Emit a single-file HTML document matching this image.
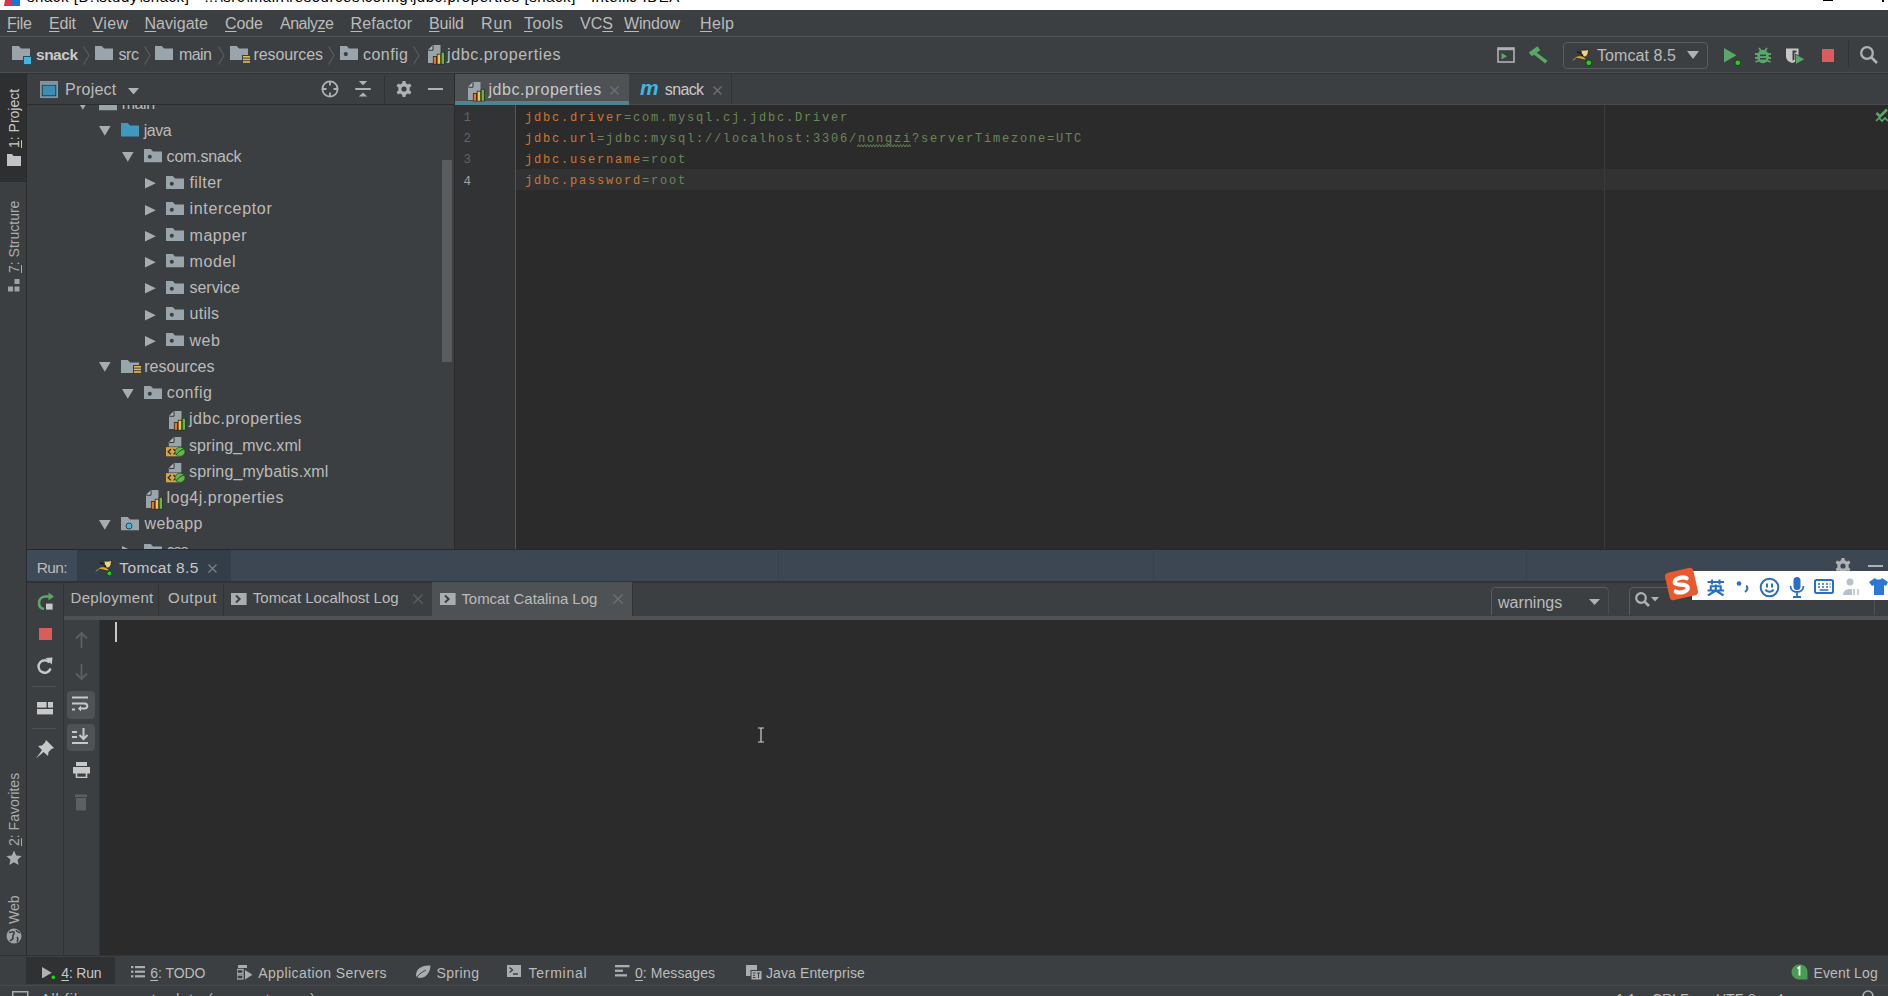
<!DOCTYPE html>
<html><head><meta charset="utf-8">
<style>
*{margin:0;padding:0;box-sizing:border-box}
html,body{width:1888px;height:996px;overflow:hidden;background:#3c3f41;font-family:"Liberation Sans",sans-serif;color:#bbbbbb;position:relative}
.a{position:absolute;display:block}
.t{position:absolute;white-space:pre}
u{text-decoration:underline;text-underline-offset:2px;text-decoration-thickness:1px}
</style></head><body>
<div class="a" style="left:0px;top:0px;width:1888px;height:10px;background:#ffffff;"></div>
<div class="a" style="left:0;top:0;width:1888px;height:10px;overflow:hidden"><div style="position:absolute;left:5px;top:-6px;width:8px;height:12px;background:#e0304a;transform:skewX(-10deg)"></div><div style="position:absolute;left:11px;top:-6px;width:9px;height:12px;background:#1a73d8"></div><div style="position:absolute;left:27px;top:-13.5px;font-size:15px;line-height:20px;color:#000;white-space:pre;letter-spacing:0.56px">snack [D:\study\snack] - ...\src\main\resources\config\jdbc.properties [snack] - IntelliJ IDEA</div><div style="position:absolute;left:1823px;top:0px;width:10px;height:1.2px;background:#000"></div><div style="position:absolute;left:1882px;top:0px;width:1.5px;height:1.5px;background:#000"></div></div>
<div class="a" style="left:0px;top:10px;width:1888px;height:26px;background:#3c3f41;"></div>
<div class="a" style="left:0px;top:36px;width:1888px;height:1px;background:#515658;"></div>
<div class="t" style="left:7.00px;top:14.52px;font-size:16px;line-height:17.875px;color:#bbbbbb;letter-spacing:-0.260px;"><u>F</u>ile</div>
<div class="t" style="left:49.00px;top:14.52px;font-size:16px;line-height:17.875px;color:#bbbbbb;letter-spacing:-0.193px;"><u>E</u>dit</div>
<div class="t" style="left:92.50px;top:14.52px;font-size:16px;line-height:17.875px;color:#bbbbbb;letter-spacing:0.370px;"><u>V</u>iew</div>
<div class="t" style="left:144.50px;top:14.52px;font-size:16px;line-height:17.875px;color:#bbbbbb;letter-spacing:0.049px;"><u>N</u>avigate</div>
<div class="t" style="left:225.00px;top:14.52px;font-size:16px;line-height:17.875px;color:#bbbbbb;letter-spacing:-0.083px;"><u>C</u>ode</div>
<div class="t" style="left:280.00px;top:14.52px;font-size:16px;line-height:17.875px;color:#bbbbbb;letter-spacing:-0.487px;">Analy<u>z</u>e</div>
<div class="t" style="left:350.60px;top:14.52px;font-size:16px;line-height:17.875px;color:#bbbbbb;letter-spacing:0.147px;"><u>R</u>efactor</div>
<div class="t" style="left:429.00px;top:14.52px;font-size:16px;line-height:17.875px;color:#bbbbbb;letter-spacing:-0.145px;"><u>B</u>uild</div>
<div class="t" style="left:481.00px;top:14.52px;font-size:16px;line-height:17.875px;color:#bbbbbb;letter-spacing:0.820px;">R<u>u</u>n</div>
<div class="t" style="left:524.00px;top:14.52px;font-size:16px;line-height:17.875px;color:#bbbbbb;letter-spacing:0.410px;"><u>T</u>ools</div>
<div class="t" style="left:580.00px;top:14.52px;font-size:16px;line-height:17.875px;color:#bbbbbb;letter-spacing:0.047px;">VC<u>S</u></div>
<div class="t" style="left:624.00px;top:14.52px;font-size:16px;line-height:17.875px;color:#bbbbbb;letter-spacing:-0.181px;"><u>W</u>indow</div>
<div class="t" style="left:700.00px;top:14.52px;font-size:16px;line-height:17.875px;color:#bbbbbb;letter-spacing:0.365px;"><u>H</u>elp</div>
<div class="a" style="left:0px;top:37px;width:1888px;height:35px;background:#3c3f41;"></div>
<div class="a" style="left:0px;top:72px;width:1888px;height:1px;background:#4b4d4f;"></div>
<svg class="a" style="left:12px;top:46px;" width="18" height="14" viewBox="0 0 18 14"><path d="M0 0H6.8L9.0 2.5H18V14H0Z" fill="#9aa4ab"/></svg>
<svg class="a" style="left:23px;top:55.5px;" width="9" height="9" viewBox="0 0 9 9"><rect x="0.5" y="0.5" width="8" height="8" fill="#40b6e0" stroke="#1d4f62" stroke-width="1"/></svg>
<div class="t" style="left:36.00px;top:45.97px;font-size:15.5px;line-height:17.317px;color:#c8c8c8;font-weight:bold;letter-spacing:-0.488px;">snack</div>
<svg class="a" style="left:83px;top:45.5px;" width="7" height="19" viewBox="0 0 7 19"><path d="M0.5 0.5L6 9.5L0.5 18.5" stroke="#5a5e60" stroke-width="1.1" fill="none"/></svg>
<svg class="a" style="left:95px;top:46px;" width="18" height="14" viewBox="0 0 18 14"><path d="M0 0H6.8L9.0 2.5H18V14H0Z" fill="#9aa4ab"/></svg>
<div class="t" style="left:118.50px;top:45.52px;font-size:16px;line-height:17.875px;color:#bbbbbb;letter-spacing:-0.414px;">src</div>
<svg class="a" style="left:144px;top:45.5px;" width="7" height="19" viewBox="0 0 7 19"><path d="M0.5 0.5L6 9.5L0.5 18.5" stroke="#5a5e60" stroke-width="1.1" fill="none"/></svg>
<svg class="a" style="left:155px;top:46px;" width="18" height="14" viewBox="0 0 18 14"><path d="M0 0H6.8L9.0 2.5H18V14H0Z" fill="#9aa4ab"/></svg>
<div class="t" style="left:179.00px;top:45.52px;font-size:16px;line-height:17.875px;color:#bbbbbb;letter-spacing:-0.562px;">main</div>
<svg class="a" style="left:218px;top:45.5px;" width="7" height="19" viewBox="0 0 7 19"><path d="M0.5 0.5L6 9.5L0.5 18.5" stroke="#5a5e60" stroke-width="1.1" fill="none"/></svg>
<svg class="a" style="left:230px;top:46px;" width="18" height="14" viewBox="0 0 18 14"><path d="M0 0H6.8L9.0 2.5H18V14H0Z" fill="#9aa4ab"/></svg>
<svg class="a" style="left:242px;top:54.5px;" width="8" height="9" viewBox="0 0 8 9"><rect x="0" y="0" width="8" height="9" fill="#3c3f41"/><rect x="1" y="1" width="7" height="1.6" fill="#e8b94a"/><rect x="1" y="3.6" width="7" height="1.6" fill="#e8b94a"/><rect x="1" y="6.2" width="7" height="1.6" fill="#e8b94a"/></svg>
<div class="t" style="left:253.50px;top:45.52px;font-size:16px;line-height:17.875px;color:#bbbbbb;letter-spacing:-0.094px;">resources</div>
<svg class="a" style="left:328px;top:45.5px;" width="7" height="19" viewBox="0 0 7 19"><path d="M0.5 0.5L6 9.5L0.5 18.5" stroke="#5a5e60" stroke-width="1.1" fill="none"/></svg>
<svg class="a" style="left:340px;top:46px;" width="18" height="14" viewBox="0 0 18 14"><path d="M0 0H6.8L9.0 2.5H18V14H0Z" fill="#9aa4ab"/><circle cx="5.8" cy="8.1" r="2.1" fill="#3c3f41"/></svg>
<div class="t" style="left:363.00px;top:45.52px;font-size:16px;line-height:17.875px;color:#bbbbbb;letter-spacing:0.459px;">config</div>
<svg class="a" style="left:413px;top:45.5px;" width="7" height="19" viewBox="0 0 7 19"><path d="M0.5 0.5L6 9.5L0.5 18.5" stroke="#5a5e60" stroke-width="1.1" fill="none"/></svg>
<svg class="a" style="left:428px;top:45px;" width="17" height="20" viewBox="0 0 17 20"><path d="M5 0H12.5V18H0V5Z" fill="#9aa4ab"/><path d="M0.3 5L5 0.3V5Z" fill="#b4bbc0"/><path d="M5 0.3V5.2H0.3" stroke="#2f3234" stroke-width="1" fill="none"/><rect x="4.9" y="11" width="4.1" height="8.4" fill="#2f2a26"/><rect x="5.7" y="11.8" width="2.5" height="7" fill="#e8722a"/><rect x="8.8" y="8.8" width="4.3" height="10.6" fill="#2f2a26"/><rect x="9.6" y="9.6" width="2.7" height="9.2" fill="#f2c14a"/><rect x="12.8" y="6.9" width="4.1" height="12.5" fill="#24301f"/><rect x="13.6" y="7.7" width="2.5" height="11.1" fill="#5fb84a"/></svg>
<div class="t" style="left:447.00px;top:45.52px;font-size:16px;line-height:17.875px;color:#bbbbbb;letter-spacing:0.610px;">jdbc.properties</div>
<svg class="a" style="left:1497px;top:47px;" width="18" height="16" viewBox="0 0 18 16"><rect x="1" y="1" width="16" height="14" fill="none" stroke="#aeb2b5" stroke-width="1.6"/><rect x="1" y="1" width="16" height="2.2" fill="#aeb2b5"/><path d="M4.5 6V12.5L10 9.25Z" fill="#59a869"/></svg>
<svg class="a" style="left:1528px;top:45px;" width="21" height="19" viewBox="0 0 21 19"><path d="M0.8 7.5L9.5 1.2L12.3 5.2L3.8 11.3Z" fill="#59a869"/><path d="M6.5 6L19.5 15.8L17.3 18.5L4.5 8.5Z" fill="#59a869"/></svg>
<div class="a" style="left:1563px;top:41.5px;width:145px;height:27px;border:1.5px solid #5b5e60;border-radius:4px"></div>
<svg class="a" style="left:1572px;top:47px;" width="18" height="15" viewBox="0 0 18 15"><path d="M9 2.5L10.5 3.2L14.5 3L16.5 2L16 7L14 9.8L11.5 10L9.5 7Z" fill="#ecd48a" stroke="#2a2410" stroke-width="0.8"/><path d="M3.5 10C6 8.5 9 8.5 11 9.5L15 12.5L12 12.8L7 11.5L4 11Z" fill="#d4ad3c" stroke="#2a2410" stroke-width="0.6"/><path d="M1 13.5L4 10.5" stroke="#c9b56a" stroke-width="0.9"/><path d="M5 4.5L9 6.5" stroke="#1e1e1e" stroke-width="1.6"/><circle cx="10.3" cy="8.2" r="1" fill="#111"/></svg>
<svg class="a" style="left:1584.7px;top:58.5px;" width="7.6" height="7.6" viewBox="0 0 7.6 7.6"><circle cx="3.8" cy="3.8" r="2.8" fill="#1fd31f" stroke="#123512" stroke-width="0.8"/></svg>
<div class="t" style="left:1597.00px;top:47.02px;font-size:16px;line-height:17.875px;color:#bbbbbb;letter-spacing:0.082px;">Tomcat 8.5</div>
<svg class="a" style="left:1687px;top:51px;" width="12" height="8" viewBox="0 0 12 8"><path d="M0 0H12L6 8Z" fill="#aeb2b5"/></svg>
<svg class="a" style="left:1724px;top:48px;" width="13" height="15" viewBox="0 0 13 15"><path d="M0 0V14.5L12.5 7.25Z" fill="#59a869"/></svg>
<svg class="a" style="left:1734.0px;top:58.6px;" width="7.6" height="7.6" viewBox="0 0 7.6 7.6"><circle cx="3.8" cy="3.8" r="2.8" fill="#1fd31f" stroke="#123512" stroke-width="0.8"/></svg>
<svg class="a" style="left:1754px;top:46px;" width="18" height="18" viewBox="0 0 18 18"><ellipse cx="9" cy="10.5" rx="5.8" ry="6.8" fill="#59a869"/><path d="M5 2L7 5M13 2L11 5M1 8H17M1 12H17M1.5 16L5 14.5M16.5 16L13 14.5" stroke="#59a869" stroke-width="1.8"/><rect x="6" y="8.6" width="6" height="1.5" fill="#3c3f41"/><rect x="6" y="12" width="6" height="1.5" fill="#3c3f41"/></svg>
<svg class="a" style="left:1785px;top:48px;" width="21" height="17" viewBox="0 0 21 17"><path d="M1 0.5H13.5V8C13.5 12 10.5 14 7.2 15C4 14 1 12 1 8Z" fill="#c8c8c8"/><path d="M7.5 2.5H11.5V4.5H9.5V11.5C9 12 8 12.5 7.5 12.5Z" fill="#3c3f41"/><path d="M10.5 6V16.5L20 11.25Z" fill="#59a869" stroke="#3c3f41" stroke-width="0.8"/></svg>
<div class="a" style="left:1822px;top:48.5px;width:12px;height:13.5px;background:#db5c5c;"></div>
<div class="a" style="left:1848px;top:41px;width:1px;height:26px;background:#323232;"></div>
<svg class="a" style="left:1858px;top:45px;" width="21" height="20" viewBox="0 0 21 20"><circle cx="9" cy="8" r="5.8" fill="none" stroke="#afb1b3" stroke-width="2.3"/><path d="M13 12L19 18" stroke="#afb1b3" stroke-width="2.6"/></svg>
<div class="a" style="left:0px;top:73px;width:26px;height:882px;background:#3c3f41;"></div>
<div class="a" style="left:0px;top:73px;width:26px;height:109px;background:#2d2f30;"></div>
<div class="a" style="left:26px;top:73px;width:1px;height:882px;background:#2b2b2b;"></div>
<div class="t" style="left:7.33px;top:148.00px;font-size:14px;line-height:15.641px;color:#c8c8c8;transform-origin:0 0;transform:rotate(-90deg)"><u>1</u>: Project</div>
<svg class="a" style="left:7px;top:154px;" width="14" height="12" viewBox="0 0 14 12"><path d="M0 0H5L6.5 2H14V12H0Z" fill="#c0c4c6"/></svg>
<div class="t" style="left:7.33px;top:272.50px;font-size:14px;line-height:15.641px;color:#a9adb0;transform-origin:0 0;transform:rotate(-90deg)"><u>7</u>: Structure</div>
<svg class="a" style="left:7px;top:279px;" width="14" height="13" viewBox="0 0 14 13"><rect x="7.5" y="0" width="5" height="5" fill="#9ea2a4"/><rect x="1" y="7.5" width="5" height="5" fill="#9ea2a4"/><rect x="7.5" y="7.5" width="5" height="5" fill="#9ea2a4"/></svg>
<div class="t" style="left:7.33px;top:846.00px;font-size:14px;line-height:15.641px;color:#a9adb0;transform-origin:0 0;transform:rotate(-90deg)"><u>2</u>: Favorites</div>
<svg class="a" style="left:6px;top:850px;" width="16" height="16" viewBox="0 0 16 16"><path d="M8 0.5L10.2 5.6L15.6 6.1L11.5 9.7L12.7 15L8 12.2L3.3 15L4.5 9.7L0.4 6.1L5.8 5.6Z" fill="#a9adb0"/></svg>
<div class="t" style="left:7.33px;top:924.00px;font-size:14px;line-height:15.641px;color:#a9adb0;transform-origin:0 0;transform:rotate(-90deg)">Web</div>
<svg class="a" style="left:6px;top:928px;" width="16" height="16" viewBox="0 0 16 16"><circle cx="8" cy="8" r="7.5" fill="#9ea2a4"/><path d="M3 4C5 5 6 3 8 4C9 6 6 7 7 9C8 11 5 12 4 13M10 2C11 4 13 4 14 5M11 9C12 10 12 12 11 14" stroke="#3c3f41" stroke-width="1.6" fill="none"/></svg>
<div class="a" style="left:27px;top:73px;width:428px;height:476px;background:#3c3f41;"></div>
<div class="a" style="left:27px;top:73px;width:428px;height:1px;background:#323232;"></div>
<div class="a" style="left:27px;top:104px;width:428px;height:1px;background:#2b2b2b;"></div>
<svg class="a" style="left:40px;top:81px;" width="18" height="17" viewBox="0 0 18 17"><rect x="0.75" y="0.75" width="16.5" height="15.5" fill="#3b8db5" stroke="#8a9499" stroke-width="1.5"/><rect x="1.5" y="1.5" width="15" height="2.8" fill="#8a9499"/><rect x="2.3" y="4.3" width="13.4" height="10.4" fill="none" stroke="#253a46" stroke-width="0.8"/></svg>
<div class="t" style="left:65.00px;top:80.52px;font-size:16px;line-height:17.875px;color:#bbbbbb;letter-spacing:0.251px;">Project</div>
<svg class="a" style="left:128px;top:87.5px;" width="11" height="6.5" viewBox="0 0 11 6.5"><path d="M0 0H11L5.5 6.5Z" fill="#aeb2b5"/></svg>
<svg class="a" style="left:320px;top:80px;" width="20" height="18" viewBox="0 0 20 18"><circle cx="10" cy="9" r="7.6" fill="none" stroke="#afb1b3" stroke-width="1.8"/><path d="M10 1V5.5M10 12.5V17M2 9H6.5M13.5 9H18" stroke="#afb1b3" stroke-width="1.8"/></svg>
<svg class="a" style="left:355px;top:80px;" width="16" height="18" viewBox="0 0 16 18"><path d="M3.8 1H12.2L8 5.2Z" fill="#afb1b3"/><rect x="0.3" y="8" width="15.5" height="2" fill="#afb1b3"/><path d="M3.8 16.6H12.2L8 12.4Z" fill="#afb1b3"/></svg>
<div class="a" style="left:383.5px;top:75px;width:1px;height:28px;background:#323232;"></div>
<svg class="a" style="left:396px;top:81px;" width="16" height="16" viewBox="0 0 16 16"><path d="M6.6 0H9.4L9.9 2.3L11.8 3.4L14 2.6L15.4 5L13.6 6.6V9.4L15.4 11L14 13.4L11.8 12.6L9.9 13.7L9.4 16H6.6L6.1 13.7L4.2 12.6L2 13.4L0.6 11L2.4 9.4V6.6L0.6 5L2 2.6L4.2 3.4L6.1 2.3Z" fill="#afb1b3"/><circle cx="8" cy="8" r="2.6" fill="#3c3f41"/></svg>
<div class="a" style="left:428.3px;top:88px;width:15px;height:2.2px;background:#afb1b3;"></div>
<div class="a" style="left:0;top:0;width:1888px;height:996px;clip-path:inset(105px 1433px 447px 27px)">
<svg class="a" style="left:76.5px;top:99.95px;" width="12" height="10" viewBox="0 0 12 10"><path d="M0 0H11.6L5.8 9.7Z" fill="#a9acae"/></svg>
<svg class="a" style="left:99px;top:97.25px;" width="18" height="13.3" viewBox="0 0 18 13.3"><path d="M0 0H6.8L9.0 2.4H18V13.3H0Z" fill="#9aa4ab"/></svg>
<div class="t" style="left:121.70px;top:95.27px;font-size:16px;line-height:17.875px;color:#bbbbbb;letter-spacing:-0.396px;">main</div>
<svg class="a" style="left:99.2px;top:126.2px;" width="12" height="10" viewBox="0 0 12 10"><path d="M0 0H11.6L5.8 9.7Z" fill="#a9acae"/></svg>
<svg class="a" style="left:120.6px;top:123.2px;" width="18" height="13.5" viewBox="0 0 18 13.5"><path d="M0 0H6.8L9.0 2.4H18V13.5H0Z" fill="#3f98be"/></svg>
<div class="t" style="left:143.70px;top:121.52px;font-size:16px;line-height:17.875px;color:#bbbbbb;letter-spacing:-0.453px;">java</div>
<svg class="a" style="left:122px;top:152.45px;" width="12" height="10" viewBox="0 0 12 10"><path d="M0 0H11.6L5.8 9.7Z" fill="#a9acae"/></svg>
<svg class="a" style="left:143.8px;top:149.45px;" width="18" height="13.3" viewBox="0 0 18 13.3"><path d="M0 0H6.8L9.0 2.4H18V13.3H0Z" fill="#9aa4ab"/><circle cx="5.8" cy="7.7" r="2.0" fill="#3c3f41"/></svg>
<div class="t" style="left:166.60px;top:147.77px;font-size:16px;line-height:17.875px;color:#bbbbbb;letter-spacing:-0.184px;">com.snack</div>
<svg class="a" style="left:145.1px;top:178.3px;" width="11" height="11" viewBox="0 0 11 11"><path d="M0 0V10.5L10.8 5.25Z" fill="#a9acae"/></svg>
<svg class="a" style="left:166px;top:175.7px;" width="18" height="13.3" viewBox="0 0 18 13.3"><path d="M0 0H6.8L9.0 2.4H18V13.3H0Z" fill="#9aa4ab"/><circle cx="5.8" cy="7.7" r="2.0" fill="#3c3f41"/></svg>
<div class="t" style="left:189.50px;top:174.02px;font-size:16px;line-height:17.875px;color:#bbbbbb;letter-spacing:0.413px;">filter</div>
<svg class="a" style="left:145.1px;top:204.55px;" width="11" height="11" viewBox="0 0 11 11"><path d="M0 0V10.5L10.8 5.25Z" fill="#a9acae"/></svg>
<svg class="a" style="left:166px;top:201.95px;" width="18" height="13.3" viewBox="0 0 18 13.3"><path d="M0 0H6.8L9.0 2.4H18V13.3H0Z" fill="#9aa4ab"/><circle cx="5.8" cy="7.7" r="2.0" fill="#3c3f41"/></svg>
<div class="t" style="left:189.50px;top:200.27px;font-size:16px;line-height:17.875px;color:#bbbbbb;letter-spacing:0.661px;">interceptor</div>
<svg class="a" style="left:145.1px;top:230.8px;" width="11" height="11" viewBox="0 0 11 11"><path d="M0 0V10.5L10.8 5.25Z" fill="#a9acae"/></svg>
<svg class="a" style="left:166px;top:228.2px;" width="18" height="13.3" viewBox="0 0 18 13.3"><path d="M0 0H6.8L9.0 2.4H18V13.3H0Z" fill="#9aa4ab"/><circle cx="5.8" cy="7.7" r="2.0" fill="#3c3f41"/></svg>
<div class="t" style="left:189.50px;top:226.52px;font-size:16px;line-height:17.875px;color:#bbbbbb;letter-spacing:0.550px;">mapper</div>
<svg class="a" style="left:145.1px;top:257.05px;" width="11" height="11" viewBox="0 0 11 11"><path d="M0 0V10.5L10.8 5.25Z" fill="#a9acae"/></svg>
<svg class="a" style="left:166px;top:254.45px;" width="18" height="13.3" viewBox="0 0 18 13.3"><path d="M0 0H6.8L9.0 2.4H18V13.3H0Z" fill="#9aa4ab"/><circle cx="5.8" cy="7.7" r="2.0" fill="#3c3f41"/></svg>
<div class="t" style="left:189.50px;top:252.77px;font-size:16px;line-height:17.875px;color:#bbbbbb;letter-spacing:0.605px;">model</div>
<svg class="a" style="left:145.1px;top:283.3px;" width="11" height="11" viewBox="0 0 11 11"><path d="M0 0V10.5L10.8 5.25Z" fill="#a9acae"/></svg>
<svg class="a" style="left:166px;top:280.7px;" width="18" height="13.3" viewBox="0 0 18 13.3"><path d="M0 0H6.8L9.0 2.4H18V13.3H0Z" fill="#9aa4ab"/><circle cx="5.8" cy="7.7" r="2.0" fill="#3c3f41"/></svg>
<div class="t" style="left:189.50px;top:279.02px;font-size:16px;line-height:17.875px;color:#bbbbbb;letter-spacing:-0.031px;">service</div>
<svg class="a" style="left:145.1px;top:309.55px;" width="11" height="11" viewBox="0 0 11 11"><path d="M0 0V10.5L10.8 5.25Z" fill="#a9acae"/></svg>
<svg class="a" style="left:166px;top:306.95px;" width="18" height="13.3" viewBox="0 0 18 13.3"><path d="M0 0H6.8L9.0 2.4H18V13.3H0Z" fill="#9aa4ab"/><circle cx="5.8" cy="7.7" r="2.0" fill="#3c3f41"/></svg>
<div class="t" style="left:189.50px;top:305.27px;font-size:16px;line-height:17.875px;color:#bbbbbb;letter-spacing:0.287px;">utils</div>
<svg class="a" style="left:145.1px;top:335.8px;" width="11" height="11" viewBox="0 0 11 11"><path d="M0 0V10.5L10.8 5.25Z" fill="#a9acae"/></svg>
<svg class="a" style="left:166px;top:333.2px;" width="18" height="13.3" viewBox="0 0 18 13.3"><path d="M0 0H6.8L9.0 2.4H18V13.3H0Z" fill="#9aa4ab"/><circle cx="5.8" cy="7.7" r="2.0" fill="#3c3f41"/></svg>
<div class="t" style="left:189.50px;top:331.52px;font-size:16px;line-height:17.875px;color:#bbbbbb;letter-spacing:0.470px;">web</div>
<svg class="a" style="left:99.4px;top:362.45px;" width="12" height="10" viewBox="0 0 12 10"><path d="M0 0H11.6L5.8 9.7Z" fill="#a9acae"/></svg>
<svg class="a" style="left:121px;top:359.75px;" width="18" height="13.3" viewBox="0 0 18 13.3"><path d="M0 0H6.8L9.0 2.4H18V13.3H0Z" fill="#9aa4ab"/></svg>
<svg class="a" style="left:132.5px;top:365.05px;" width="8" height="9" viewBox="0 0 8 9"><rect x="0" y="0" width="8" height="9" fill="#3c3f41"/><rect x="1" y="1" width="7" height="1.6" fill="#e8b94a"/><rect x="1" y="3.6" width="7" height="1.6" fill="#e8b94a"/><rect x="1" y="6.2" width="7" height="1.6" fill="#e8b94a"/></svg>
<div class="t" style="left:144.30px;top:357.77px;font-size:16px;line-height:17.875px;color:#bbbbbb;letter-spacing:-0.006px;">resources</div>
<svg class="a" style="left:121.8px;top:388.7px;" width="12" height="10" viewBox="0 0 12 10"><path d="M0 0H11.6L5.8 9.7Z" fill="#a9acae"/></svg>
<svg class="a" style="left:143.9px;top:385.7px;" width="18" height="13.3" viewBox="0 0 18 13.3"><path d="M0 0H6.8L9.0 2.4H18V13.3H0Z" fill="#9aa4ab"/><circle cx="5.8" cy="7.7" r="2.0" fill="#3c3f41"/></svg>
<div class="t" style="left:166.80px;top:384.02px;font-size:16px;line-height:17.875px;color:#bbbbbb;letter-spacing:0.459px;">config</div>
<svg class="a" style="left:168.8px;top:410.75px;" width="17" height="20" viewBox="0 0 17 20"><path d="M5 0H12.5V18H0V5Z" fill="#9aa4ab"/><path d="M0.3 5L5 0.3V5Z" fill="#b4bbc0"/><path d="M5 0.3V5.2H0.3" stroke="#2f3234" stroke-width="1" fill="none"/><rect x="4.9" y="11" width="4.1" height="8.4" fill="#2f2a26"/><rect x="5.7" y="11.8" width="2.5" height="7" fill="#e8722a"/><rect x="8.8" y="8.8" width="4.3" height="10.6" fill="#2f2a26"/><rect x="9.6" y="9.6" width="2.7" height="9.2" fill="#f2c14a"/><rect x="12.8" y="6.9" width="4.1" height="12.5" fill="#24301f"/><rect x="13.6" y="7.7" width="2.5" height="11.1" fill="#5fb84a"/></svg>
<div class="t" style="left:189.00px;top:410.27px;font-size:16px;line-height:17.875px;color:#bbbbbb;letter-spacing:0.532px;">jdbc.properties</div>
<svg class="a" style="left:166px;top:436.5px;" width="20" height="20" viewBox="0 0 20 20"><path d="M8 0H15.3V9.6H2.8V5.2Z" fill="#9aa4ab"/><path d="M3 5.2L8 0.2V5.2Z" fill="#b4bbc0"/><path d="M8 0.2V5.4H3" stroke="#2f3234" stroke-width="1" fill="none"/><rect x="0" y="10.1" width="15" height="9.2" fill="#d6a444"/><path d="M5 12L2.2 14.7L5 17.4" stroke="#2b2b2b" stroke-width="1.3" fill="none"/><path d="M7.5 12L10.3 14.7L7.5 17.4" stroke="#2b2b2b" stroke-width="1.3" fill="none"/><ellipse cx="14" cy="14.8" rx="5" ry="4.6" fill="#5cb84a" stroke="#2b3a26" stroke-width="0.6"/><path d="M10 18C12 15 14 13.5 18 12" stroke="#244a1f" stroke-width="1" fill="none"/></svg>
<div class="t" style="left:189.00px;top:436.52px;font-size:16px;line-height:17.875px;color:#bbbbbb;letter-spacing:0.097px;">spring_mvc.xml</div>
<svg class="a" style="left:166px;top:462.75px;" width="20" height="20" viewBox="0 0 20 20"><path d="M8 0H15.3V9.6H2.8V5.2Z" fill="#9aa4ab"/><path d="M3 5.2L8 0.2V5.2Z" fill="#b4bbc0"/><path d="M8 0.2V5.4H3" stroke="#2f3234" stroke-width="1" fill="none"/><rect x="0" y="10.1" width="15" height="9.2" fill="#d6a444"/><path d="M5 12L2.2 14.7L5 17.4" stroke="#2b2b2b" stroke-width="1.3" fill="none"/><path d="M7.5 12L10.3 14.7L7.5 17.4" stroke="#2b2b2b" stroke-width="1.3" fill="none"/><ellipse cx="14" cy="14.8" rx="5" ry="4.6" fill="#5cb84a" stroke="#2b3a26" stroke-width="0.6"/><path d="M10 18C12 15 14 13.5 18 12" stroke="#244a1f" stroke-width="1" fill="none"/></svg>
<div class="t" style="left:189.00px;top:462.77px;font-size:16px;line-height:17.875px;color:#bbbbbb;letter-spacing:0.145px;">spring_mybatis.xml</div>
<svg class="a" style="left:146.3px;top:489.5px;" width="17" height="20" viewBox="0 0 17 20"><path d="M5 0H12.5V18H0V5Z" fill="#9aa4ab"/><path d="M0.3 5L5 0.3V5Z" fill="#b4bbc0"/><path d="M5 0.3V5.2H0.3" stroke="#2f3234" stroke-width="1" fill="none"/><rect x="4.9" y="11" width="4.1" height="8.4" fill="#2f2a26"/><rect x="5.7" y="11.8" width="2.5" height="7" fill="#e8722a"/><rect x="8.8" y="8.8" width="4.3" height="10.6" fill="#2f2a26"/><rect x="9.6" y="9.6" width="2.7" height="9.2" fill="#f2c14a"/><rect x="12.8" y="6.9" width="4.1" height="12.5" fill="#24301f"/><rect x="13.6" y="7.7" width="2.5" height="11.1" fill="#5fb84a"/></svg>
<div class="t" style="left:166.50px;top:489.02px;font-size:16px;line-height:17.875px;color:#bbbbbb;letter-spacing:0.500px;">log4j.properties</div>
<svg class="a" style="left:99.4px;top:519.95px;" width="12" height="10" viewBox="0 0 12 10"><path d="M0 0H11.6L5.8 9.7Z" fill="#a9acae"/></svg>
<svg class="a" style="left:121px;top:517.25px;" width="18" height="13.3" viewBox="0 0 18 13.3"><path d="M0 0H6.8L9.0 2.4H18V13.3H0Z" fill="#9aa4ab"/></svg>
<svg class="a" style="left:124.5px;top:522.25px;" width="8" height="8" viewBox="0 0 8 8"><circle cx="4" cy="4" r="3" fill="#40b6e0" stroke="#2b4652" stroke-width="1"/></svg>
<div class="t" style="left:144.60px;top:515.27px;font-size:16px;line-height:17.875px;color:#bbbbbb;letter-spacing:0.351px;">webapp</div>
<svg class="a" style="left:122px;top:545.8px;" width="11" height="11" viewBox="0 0 11 11"><path d="M0 0V10.5L10.8 5.25Z" fill="#a9acae"/></svg>
<svg class="a" style="left:144px;top:543.5px;" width="18" height="13.3" viewBox="0 0 18 13.3"><path d="M0 0H6.8L9.0 2.4H18V13.3H0Z" fill="#9aa4ab"/></svg>
<div class="t" style="left:166.50px;top:541.52px;font-size:16px;line-height:17.875px;color:#bbbbbb;letter-spacing:-1.000px;">css</div>
</div>
<div class="a" style="left:442px;top:160px;width:10px;height:202px;background:#5a5d5f;border-radius:1px"></div>
<div class="a" style="left:454px;top:73px;width:1px;height:476px;background:#2b2b2b;"></div>
<div class="a" style="left:455px;top:73px;width:1433px;height:32px;background:#3c3f41;"></div>
<div class="a" style="left:455px;top:73px;width:1433px;height:1px;background:#323232;"></div>
<div class="a" style="left:455px;top:104px;width:1433px;height:1px;background:#47494b;"></div>
<div class="a" style="left:455px;top:74px;width:174px;height:27px;background:#4e5254;"></div>
<div class="a" style="left:455px;top:101px;width:174px;height:3.8px;background:#508290;"></div>
<svg class="a" style="left:468px;top:81.5px;" width="17" height="20" viewBox="0 0 17 20"><path d="M5 0H12.5V18H0V5Z" fill="#9aa4ab"/><path d="M0.3 5L5 0.3V5Z" fill="#b4bbc0"/><path d="M5 0.3V5.2H0.3" stroke="#2f3234" stroke-width="1" fill="none"/><rect x="4.9" y="11" width="4.1" height="8.4" fill="#2f2a26"/><rect x="5.7" y="11.8" width="2.5" height="7" fill="#e8722a"/><rect x="8.8" y="8.8" width="4.3" height="10.6" fill="#2f2a26"/><rect x="9.6" y="9.6" width="2.7" height="9.2" fill="#f2c14a"/><rect x="12.8" y="6.9" width="4.1" height="12.5" fill="#24301f"/><rect x="13.6" y="7.7" width="2.5" height="11.1" fill="#5fb84a"/></svg>
<div class="t" style="left:488.50px;top:81.12px;font-size:16px;line-height:17.875px;color:#c8c8c8;letter-spacing:0.560px;">jdbc.properties</div>
<svg class="a" style="left:610.3px;top:85.5px;" width="9" height="9" viewBox="0 0 9 9"><path d="M0.5 0.5L8.5 8.5M8.5 0.5L0.5 8.5" stroke="#6f7274" stroke-width="1.3"/></svg>
<div class="a" style="left:730.5px;top:74px;width:1px;height:30px;background:#323232;"></div>
<div class="t" style="left:640px;top:76px;font-size:21px;line-height:23px;color:#40b6e0;font-style:italic;font-weight:bold;letter-spacing:-0.5px">m</div>
<div class="t" style="left:664.80px;top:81.12px;font-size:16px;line-height:17.875px;color:#c8c8c8;letter-spacing:-0.649px;">snack</div>
<svg class="a" style="left:713.4px;top:85.5px;" width="9" height="9" viewBox="0 0 9 9"><path d="M0.5 0.5L8.5 8.5M8.5 0.5L0.5 8.5" stroke="#6f7274" stroke-width="1.3"/></svg>
<div class="a" style="left:455px;top:105px;width:1433px;height:444px;background:#2b2b2b;"></div>
<div class="a" style="left:455px;top:105px;width:60px;height:444px;background:#313335;"></div>
<div class="a" style="left:515px;top:105px;width:1px;height:444px;background:#555555;"></div>
<div class="a" style="left:516px;top:168.8px;width:1372px;height:21.5px;background:#323232;"></div>
<div class="a" style="left:1604px;top:105px;width:1px;height:444px;background:#3b3b3b;"></div>
<div class="t" style="left:463.60px;top:111.09px;font-size:12.5px;line-height:14.160px;color:#606366;font-family:'Liberation Mono',monospace;">1</div>
<div class="t" style="left:524.90px;top:111.51px;font-size:12px;line-height:13.594px;color:#6a8759;font-family:'Liberation Mono',monospace;letter-spacing:1.8px;"><span style="color:#cc7832">jdbc.driver</span>=com.mysql.cj.jdbc.Driver</div>
<div class="t" style="left:463.60px;top:132.29px;font-size:12.5px;line-height:14.160px;color:#606366;font-family:'Liberation Mono',monospace;">2</div>
<div class="t" style="left:524.90px;top:132.71px;font-size:12px;line-height:13.594px;color:#6a8759;font-family:'Liberation Mono',monospace;letter-spacing:1.8px;"><span style="color:#cc7832">jdbc.url</span>=jdbc:mysql://localhost:3306/nongzi?serverTimezone=UTC</div>
<div class="t" style="left:463.60px;top:153.49px;font-size:12.5px;line-height:14.160px;color:#606366;font-family:'Liberation Mono',monospace;">3</div>
<div class="t" style="left:524.90px;top:153.91px;font-size:12px;line-height:13.594px;color:#6a8759;font-family:'Liberation Mono',monospace;letter-spacing:1.8px;"><span style="color:#cc7832">jdbc.username</span>=root</div>
<div class="t" style="left:463.60px;top:174.69px;font-size:12.5px;line-height:14.160px;color:#a4a3a3;font-family:'Liberation Mono',monospace;">4</div>
<div class="t" style="left:524.90px;top:175.11px;font-size:12px;line-height:13.594px;color:#6a8759;font-family:'Liberation Mono',monospace;letter-spacing:1.8px;"><span style="color:#cc7832">jdbc.password</span>=root</div>
<svg class="a" style="left:857.2px;top:143.5px;" width="54" height="4" viewBox="0 0 54 4"><path d="M0 3L1.5 0.5L3 3L4.5 0.5L6 3L7.5 0.5L9 3L10.5 0.5L12 3L13.5 0.5L15 3L16.5 0.5L18 3L19.5 0.5L21 3L22.5 0.5L24 3L25.5 0.5L27 3L28.5 0.5L30 3L31.5 0.5L33 3L34.5 0.5L36 3L37.5 0.5L39 3L40.5 0.5L42 3L43.5 0.5L45 3L46.5 0.5L48 3L49.5 0.5L51 3L52.5 0.5L54 3" stroke="#6a8759" stroke-width="0.9" fill="none"/></svg>
<svg class="a" style="left:1875px;top:107px;" width="13" height="16" viewBox="0 0 13 16"><path d="M1.5 6L5 9.5L12 2.5" stroke="#59a869" stroke-width="2.6" fill="none"/><path d="M1 14L4 11L7 14L10 11L13 14" stroke="#59a869" stroke-width="1.6" fill="none"/></svg>
<div class="a" style="left:27px;top:549px;width:1861px;height:1.3px;background:#26282a;"></div>
<div class="a" style="left:27px;top:550px;width:1861px;height:31px;background:#3c4753;"></div>
<div class="a" style="left:27px;top:550px;width:50px;height:31px;background:#3e4a58;"></div>
<div class="a" style="left:77px;top:550px;width:154px;height:31px;background:#343e48;"></div>
<div class="a" style="left:778px;top:551px;width:1px;height:29px;background:#37414c;"></div>
<div class="a" style="left:1153px;top:551px;width:1px;height:29px;background:#37414c;"></div>
<div class="a" style="left:1526px;top:551px;width:1px;height:29px;background:#37414c;"></div>
<div class="t" style="left:36.70px;top:558.97px;font-size:15.5px;line-height:17.317px;color:#bbbbbb;letter-spacing:-0.583px;">Run:</div>
<svg class="a" style="left:95px;top:558px;" width="18" height="15" viewBox="0 0 18 15"><path d="M9 2.5L10.5 3.2L14.5 3L16.5 2L16 7L14 9.8L11.5 10L9.5 7Z" fill="#ecd48a" stroke="#2a2410" stroke-width="0.8"/><path d="M3.5 10C6 8.5 9 8.5 11 9.5L15 12.5L12 12.8L7 11.5L4 11Z" fill="#d4ad3c" stroke="#2a2410" stroke-width="0.6"/><path d="M1 13.5L4 10.5" stroke="#c9b56a" stroke-width="0.9"/><path d="M5 4.5L9 6.5" stroke="#1e1e1e" stroke-width="1.6"/><circle cx="10.3" cy="8.2" r="1" fill="#111"/></svg>
<svg class="a" style="left:106.39999999999999px;top:570.3000000000001px;" width="6.8" height="6.8" viewBox="0 0 6.8 6.8"><circle cx="3.4" cy="3.4" r="2.4" fill="#1fd31f" stroke="#123512" stroke-width="0.8"/></svg>
<div class="t" style="left:119.30px;top:558.97px;font-size:15.5px;line-height:17.317px;color:#c8c8c8;letter-spacing:0.354px;">Tomcat 8.5</div>
<svg class="a" style="left:208.3px;top:563.8px;" width="9" height="9" viewBox="0 0 9 9"><path d="M0.5 0.5L8.5 8.5M8.5 0.5L0.5 8.5" stroke="#7d8084" stroke-width="1.3"/></svg>
<div class="a" style="left:27px;top:581px;width:1861px;height:2px;background:#323232;"></div>
<div class="a" style="left:27px;top:583px;width:36px;height:372px;background:#3c3f41;"></div>
<div class="a" style="left:63px;top:583px;width:1px;height:372px;background:#323232;"></div>
<div class="a" style="left:64px;top:583px;width:1824px;height:32px;background:#3c3f41;"></div>
<div class="a" style="left:64px;top:615.5px;width:1824px;height:4.8px;background:#4e5254;"></div>
<div class="a" style="left:64px;top:620.3px;width:35px;height:335px;background:#3c3f41;"></div>
<div class="a" style="left:99px;top:620.3px;width:1px;height:335px;background:#323232;"></div>
<div class="a" style="left:100px;top:620.3px;width:1788px;height:335px;background:#2b2b2b;"></div>
<div class="a" style="left:158.2px;top:584px;width:1px;height:31px;background:#323232;"></div>
<div class="a" style="left:223.4px;top:584px;width:1px;height:31px;background:#323232;"></div>
<div class="a" style="left:431.8px;top:584px;width:1px;height:31px;background:#323232;"></div>
<div class="a" style="left:432px;top:582px;width:200px;height:33.5px;background:#4e5254;"></div>
<div class="a" style="left:631.7px;top:584px;width:1px;height:31px;background:#323232;"></div>
<div class="t" style="left:70.50px;top:590.42px;font-size:15px;line-height:16.758px;color:#bbbbbb;letter-spacing:0.295px;">Deployment</div>
<div class="t" style="left:168.10px;top:590.42px;font-size:15px;line-height:16.758px;color:#bbbbbb;letter-spacing:0.634px;">Output</div>
<svg class="a" style="left:231.3px;top:592.9px;" width="16" height="13" viewBox="0 0 16 13"><rect x="0" y="0" width="15.6" height="12" fill="#a9adb0"/><path d="M5 2.6L8.6 6L5 9.4" stroke="#3c3f41" stroke-width="2" fill="none"/></svg>
<div class="t" style="left:252.80px;top:590.42px;font-size:15px;line-height:16.758px;color:#bbbbbb;letter-spacing:-0.006px;">Tomcat Localhost Log</div>
<svg class="a" style="left:412.7px;top:594px;" width="10" height="10" viewBox="0 0 10 10"><path d="M0.5 0.5L9.5 9.5M9.5 0.5L0.5 9.5" stroke="#5e6163" stroke-width="1.3"/></svg>
<svg class="a" style="left:440.3px;top:592.5px;" width="16" height="13" viewBox="0 0 16 13"><rect x="0" y="0" width="15.6" height="12" fill="#a9adb0"/><path d="M5 2.6L8.6 6L5 9.4" stroke="#3c3f41" stroke-width="2" fill="none"/></svg>
<div class="t" style="left:461.40px;top:590.62px;font-size:15px;line-height:16.758px;color:#bbbbbb;letter-spacing:-0.047px;">Tomcat Catalina Log</div>
<svg class="a" style="left:613px;top:594px;" width="10" height="10" viewBox="0 0 10 10"><path d="M0.5 0.5L9.5 9.5M9.5 0.5L0.5 9.5" stroke="#6f7274" stroke-width="1.3"/></svg>
<div class="a" style="left:1490.5px;top:586.5px;width:118px;height:32px;border:1.5px solid #5b5e60;border-radius:4px;clip-path:inset(0 0 3.5px 0)"></div>
<div class="t" style="left:1498.00px;top:594.02px;font-size:16px;line-height:17.875px;color:#bbbbbb;letter-spacing:0.038px;">warnings</div>
<svg class="a" style="left:1588.7px;top:599px;" width="11" height="6" viewBox="0 0 11 6"><path d="M0 0H11L5.5 6Z" fill="#aeb2b5"/></svg>
<div class="a" style="left:1628.7px;top:586.5px;width:246px;height:32px;border:1.5px solid #5b5e60;border-radius:4px;clip-path:inset(0 0 3.5px 0)"></div>
<svg class="a" style="left:1634px;top:591px;" width="26" height="18" viewBox="0 0 26 18"><circle cx="7" cy="7" r="4.8" fill="none" stroke="#afb1b3" stroke-width="2.2"/><path d="M10.3 10.3L15 15" stroke="#afb1b3" stroke-width="2.6"/><path d="M17 6H25L21 10.5Z" fill="#afb1b3"/></svg>
<svg class="a" style="left:37px;top:592px;" width="18" height="18" viewBox="0 0 18 18"><path d="M13 4.5H9C4.5 4.5 2 7.5 2 11C2 14 4 16.5 7 17" stroke="#59a869" stroke-width="2.6" fill="none"/><path d="M11.5 0.5L17 4.5L11.5 8.5Z" fill="#59a869"/><rect x="9" y="11.6" width="6.6" height="6" fill="#c8c8c8"/></svg>
<div class="a" style="left:38.5px;top:627.7px;width:13.1px;height:12.4px;background:#db5c5c;"></div>
<svg class="a" style="left:36px;top:656px;" width="18" height="19" viewBox="0 0 18 19"><path d="M13.5 6.5A6.2 6.2 0 1 0 14.6 12.5" stroke="#c8c8c8" stroke-width="2.4" fill="none"/><path d="M9.5 2L16.5 1.5L15.8 8.5Z" fill="#c8c8c8"/></svg>
<div class="a" style="left:32px;top:686px;width:24px;height:1px;background:#4e5254;"></div>
<svg class="a" style="left:36.8px;top:702px;" width="16" height="13" viewBox="0 0 16 13"><rect x="0" y="0" width="9.6" height="5.6" fill="#c8c8c8"/><rect x="11" y="0" width="5" height="5.6" fill="#c8c8c8"/><rect x="0" y="7" width="16" height="5.4" fill="#c8c8c8"/></svg>
<div class="a" style="left:32px;top:728px;width:24px;height:1px;background:#4e5254;"></div>
<svg class="a" style="left:35px;top:739px;" width="20" height="20" viewBox="0 0 20 20"><path d="M11 1L19 9L16.5 10L13.5 13L13 17L8.5 13L1 19.5L7 11L3 7L7 6.5L10 3.5Z" fill="#c8c8c8"/></svg>
<svg class="a" style="left:74.5px;top:632px;" width="13" height="17" viewBox="0 0 13 17"><path d="M6.5 1V16M1 6.5L6.5 1L12 6.5" stroke="#5d6062" stroke-width="1.8" fill="none"/></svg>
<svg class="a" style="left:74.5px;top:664px;" width="13" height="17" viewBox="0 0 13 17"><path d="M6.5 0V15M1 9.5L6.5 15L12 9.5" stroke="#5d6062" stroke-width="1.8" fill="none"/></svg>
<div class="a" style="left:67.4px;top:691px;width:27.5px;height:27.5px;background:#4e5254;border-radius:4px"></div>
<svg class="a" style="left:72px;top:696px;" width="18" height="17" viewBox="0 0 18 17"><rect x="0" y="0.5" width="16" height="2" fill="#c8c8c8"/><rect x="0" y="6.5" width="13" height="2" fill="#c8c8c8"/><path d="M12.5 7.5C16 7.5 16.5 12.5 12.5 12.5H7.5" stroke="#c8c8c8" stroke-width="2" fill="none"/><path d="M9 9.5L6 12.5L9 15.5Z" fill="#c8c8c8"/><rect x="0" y="12.5" width="3" height="2" fill="#c8c8c8"/></svg>
<div class="a" style="left:67.4px;top:723.6px;width:27.5px;height:27.8px;background:#4e5254;border-radius:4px"></div>
<svg class="a" style="left:72px;top:728px;" width="18" height="18" viewBox="0 0 18 18"><rect x="0" y="3" width="5" height="2" fill="#c8c8c8"/><rect x="0" y="8" width="5" height="2" fill="#c8c8c8"/><rect x="0" y="14" width="16" height="2" fill="#c8c8c8"/><path d="M11.5 0V11M7.5 7L11.5 11L15.5 7" stroke="#c8c8c8" stroke-width="2" fill="none"/></svg>
<svg class="a" style="left:72.8px;top:762px;" width="17" height="16" viewBox="0 0 17 16"><rect x="3" y="0" width="11" height="4" fill="#c8c8c8"/><rect x="0" y="5" width="17" height="6.5" fill="#c8c8c8"/><rect x="3.5" y="10" width="10" height="5.5" fill="none" stroke="#c8c8c8" stroke-width="1.6"/></svg>
<svg class="a" style="left:74px;top:794px;" width="14" height="17" viewBox="0 0 14 17"><rect x="1" y="0.5" width="12" height="2.5" fill="#5d6062"/><rect x="2" y="4" width="10" height="12.5" fill="#5d6062"/></svg>
<div class="a" style="left:115px;top:621.5px;width:2px;height:20px;background:#c8c8c8;"></div>
<svg class="a" style="left:756px;top:727px;" width="10" height="16" viewBox="0 0 10 16"><path d="M2 1H8M5 1V15M2 15H8" stroke="#d0d0d0" stroke-width="1.2" fill="none"/></svg>
<svg class="a" style="left:1835px;top:558px;" width="16" height="16" viewBox="0 0 16 16"><path d="M6.6 0H9.4L9.9 2.3L11.8 3.4L14 2.6L15.4 5L13.6 6.6V9.4L15.4 11L14 13.4L11.8 12.6L9.9 13.7L9.4 16H6.6L6.1 13.7L4.2 12.6L2 13.4L0.6 11L2.4 9.4V6.6L0.6 5L2 2.6L4.2 3.4L6.1 2.3Z" fill="#afb1b3"/><circle cx="8" cy="8" r="2.6" fill="#3c4753"/></svg>
<div class="a" style="left:1867.5px;top:564.5px;width:15.2px;height:2.5px;background:#afb1b3;"></div>
<div class="a" style="left:0px;top:955px;width:1888px;height:1px;background:#323232;"></div>
<div class="a" style="left:0px;top:956px;width:1888px;height:29px;background:#3c3f41;"></div>
<div class="a" style="left:26px;top:957.4px;width:89px;height:26.5px;background:#2f3133;"></div>
<div class="a" style="left:0px;top:984.5px;width:1888px;height:1px;background:#46484a;"></div>
<div class="a" style="left:0px;top:985.5px;width:1888px;height:10.5px;background:#3c3f41;"></div>
<svg class="a" style="left:42px;top:966.5px;" width="10" height="11.5" viewBox="0 0 10 11.5"><path d="M0 0V11.5L9.8 5.75Z" fill="#afb1b3"/></svg>
<svg class="a" style="left:50.2px;top:973.7px;" width="6.6" height="6.6" viewBox="0 0 6.6 6.6"><circle cx="3.3" cy="3.3" r="2.3" fill="#1fd31f" stroke="#123512" stroke-width="0.8"/></svg>
<div class="t" style="left:61.30px;top:965.83px;font-size:14px;line-height:15.641px;color:#c8c8c8;letter-spacing:-0.190px;"><u>4</u>: Run</div>
<svg class="a" style="left:130.6px;top:966px;" width="14" height="12" viewBox="0 0 14 12"><rect x="0" y="0" width="2.4" height="2.2" fill="#a9adb0"/><rect x="4" y="0" width="10" height="2.2" fill="#a9adb0"/><rect x="0" y="4.6" width="2.4" height="2.2" fill="#a9adb0"/><rect x="4" y="4.6" width="10" height="2.2" fill="#a9adb0"/><rect x="0" y="9.2" width="2.4" height="2.2" fill="#a9adb0"/><rect x="4" y="9.2" width="10" height="2.2" fill="#a9adb0"/></svg>
<div class="t" style="left:150.30px;top:965.83px;font-size:14px;line-height:15.641px;color:#bbbbbb;letter-spacing:-0.069px;"><u>6</u>: TODO</div>
<svg class="a" style="left:237px;top:964.8px;" width="16" height="15" viewBox="0 0 16 15"><rect x="1" y="0" width="9" height="3" fill="#a9adb0"/><rect x="0" y="4.5" width="6" height="4" fill="none" stroke="#a9adb0" stroke-width="1.3"/><rect x="0" y="10" width="6" height="4" fill="none" stroke="#a9adb0" stroke-width="1.3"/><path d="M8 5V14.5L15.5 9.75Z" fill="#a9adb0"/></svg>
<div class="t" style="left:258.30px;top:965.83px;font-size:14px;line-height:15.641px;color:#bbbbbb;letter-spacing:0.421px;">Application Servers</div>
<svg class="a" style="left:415.4px;top:964.5px;" width="16" height="14" viewBox="0 0 16 14"><path d="M15.5 0.5C8 0 0.5 3 1 11C2 13 5 13.5 8 12.5C13 10.5 15 6 15.5 0.5Z" fill="#a9adb0"/><path d="M2 12C5 8 8 6.5 11 5" stroke="#3c3f41" stroke-width="1" fill="none"/></svg>
<div class="t" style="left:436.50px;top:965.83px;font-size:14px;line-height:15.641px;color:#bbbbbb;letter-spacing:0.406px;">Spring</div>
<svg class="a" style="left:507.3px;top:965px;" width="14" height="12" viewBox="0 0 14 12"><rect x="0" y="0" width="14" height="12" fill="#a9adb0"/><path d="M2.5 2.5L5.5 5L2.5 7.5M6 9H11" stroke="#3c3f41" stroke-width="1.4" fill="none"/></svg>
<div class="t" style="left:528.40px;top:965.83px;font-size:14px;line-height:15.641px;color:#bbbbbb;letter-spacing:0.771px;">Terminal</div>
<svg class="a" style="left:614.5px;top:965px;" width="15" height="12" viewBox="0 0 15 12"><rect x="0" y="0" width="14.5" height="2.3" fill="#a9adb0"/><rect x="0" y="4.6" width="8" height="2.3" fill="#a9adb0"/><rect x="0" y="9.2" width="12" height="2.3" fill="#a9adb0"/></svg>
<div class="t" style="left:635.00px;top:965.83px;font-size:14px;line-height:15.641px;color:#bbbbbb;letter-spacing:0.062px;"><u>0</u>: Messages</div>
<svg class="a" style="left:745.6px;top:964.5px;" width="16" height="15" viewBox="0 0 16 15"><rect x="0" y="0" width="11" height="11" fill="#a9adb0"/><rect x="4.5" y="5" width="11" height="9.5" fill="#3c3f41"/><rect x="5.5" y="6" width="10" height="8.5" fill="#a9adb0"/><path d="M7 8H9.5M7 10.3H9M7 12.5H9.5M11 8H14M12.5 8V13" stroke="#3c3f41" stroke-width="1" fill="none"/></svg>
<div class="t" style="left:766.00px;top:965.83px;font-size:14px;line-height:15.641px;color:#bbbbbb;letter-spacing:0.108px;">Java Enterprise</div>
<svg class="a" style="left:1790.8px;top:964.2px;" width="17" height="16" viewBox="0 0 17 16"><path d="M8 0.5A7.5 7.5 0 1 0 8 15.5H16.5V8A7.5 7.5 0 0 0 8 0.5Z" fill="#499c54"/><path d="M6.5 4.5L8.5 3.2V11.5" stroke="#ffffff" stroke-width="1.8" fill="none"/></svg>
<div class="t" style="left:1813.40px;top:965.83px;font-size:14px;line-height:15.641px;color:#bbbbbb;letter-spacing:0.155px;">Event Log</div>
<div class="a" style="left:0;top:0;width:1888px;height:996px;clip-path:inset(985.5px 0px 0px 0px)">
<svg class="a" style="left:11.5px;top:991px;" width="17" height="10" viewBox="0 0 17 10"><rect x="0.75" y="0.75" width="15" height="9" fill="none" stroke="#a9adb0" stroke-width="1.5"/></svg>
<div class="t" style="left:41.00px;top:992.33px;font-size:14px;line-height:15.641px;color:#bbbbbb;letter-spacing:1.075px;">All files are up-to-date (moments ago)</div>
<div class="t" style="left:1616.00px;top:992.33px;font-size:14px;line-height:15.641px;color:#bbbbbb;">1:1</div>
<div class="t" style="left:1652.00px;top:992.33px;font-size:14px;line-height:15.641px;color:#bbbbbb;">CRLF</div>
<div class="t" style="left:1694.00px;top:992.33px;font-size:14px;line-height:15.641px;color:#bbbbbb;">÷</div>
<div class="t" style="left:1716.00px;top:992.33px;font-size:14px;line-height:15.641px;color:#bbbbbb;">UTF-8</div>
<div class="t" style="left:1758.00px;top:992.33px;font-size:14px;line-height:15.641px;color:#bbbbbb;">÷</div>
<div class="t" style="left:1776.00px;top:992.33px;font-size:14px;line-height:15.641px;color:#bbbbbb;">4</div>
<div class="t" style="left:1844.00px;top:992.33px;font-size:14px;line-height:15.641px;color:#bbbbbb;">÷</div>
<svg class="a" style="left:1861px;top:990px;" width="14" height="10" viewBox="0 0 14 10"><circle cx="7" cy="6" r="5" fill="none" stroke="#a9adb0" stroke-width="1.5"/></svg>
</div>
<div class="a" style="left:1691.6px;top:570.8px;width:196.4px;height:29px;background:#ffffff;"></div>
<div class="a" style="left:1667px;top:570px;width:29px;height:28px;background:#e9592c;border-radius:4px;transform:rotate(-13deg)"></div>
<svg class="a" style="left:1668px;top:572px;" width="28" height="26" viewBox="0 0 28 26"><path d="M20 7.5C17 4.5 8 4.5 7.5 9C7 13 19 11.5 19 16.5C19 21 10 21 6.5 18" stroke="#ffffff" stroke-width="4.2" fill="none" stroke-linecap="round" transform="rotate(-13 14 13)"/></svg>
<svg class="a" style="left:1706.5px;top:578.5px;" width="18" height="17" viewBox="0 0 18 17"><path d="M0.5 3H17M5 0.5V5.5M12.5 0.5V5.5M3.8 11.5V7.3H13.7V11.5M0.5 11.5H17M8.8 5.5V11.5M8.8 11.5L1 16.5M8.8 11.5L16.5 16.5" stroke="#2a6fc4" stroke-width="2.1" fill="none"/></svg>
<svg class="a" style="left:1736px;top:580px;" width="14" height="13" viewBox="0 0 14 13"><circle cx="3" cy="3.5" r="2.3" fill="#2a6fc4"/><path d="M10 6C12 6.5 12 10 9 12" stroke="#2a6fc4" stroke-width="2" fill="none"/></svg>
<svg class="a" style="left:1759px;top:576.5px;" width="21" height="21" viewBox="0 0 21 21"><circle cx="10.5" cy="10.5" r="8.8" fill="none" stroke="#2a6fc4" stroke-width="2"/><rect x="7" y="6.5" width="2" height="4" fill="#2a6fc4"/><rect x="12" y="6.5" width="2" height="4" fill="#2a6fc4"/><path d="M6.5 12.5C8 15.5 13 15.5 14.5 12.5" stroke="#2a6fc4" stroke-width="1.8" fill="none"/></svg>
<svg class="a" style="left:1789px;top:576.5px;" width="16" height="21" viewBox="0 0 16 21"><rect x="4.5" y="0" width="7" height="13" rx="3.5" fill="#2a6fc4"/><path d="M1.5 9C1.5 17 14.5 17 14.5 9M8 16V20M4 20H12" stroke="#2a6fc4" stroke-width="1.8" fill="none"/></svg>
<svg class="a" style="left:1814px;top:579px;" width="20" height="15" viewBox="0 0 20 15"><rect x="1" y="1" width="18" height="13" rx="1.5" fill="none" stroke="#2a6fc4" stroke-width="2"/><path d="M4 5H6M8 5H10M12 5H14M15.5 5H16.5M4 8H6M8 8H10M12 8H14M15.5 8H16.5M5.5 11H14.5" stroke="#2a6fc4" stroke-width="1.6"/></svg>
<svg class="a" style="left:1843px;top:577.5px;" width="18" height="18" viewBox="0 0 18 18"><circle cx="7" cy="4" r="3.5" fill="#b9c2cc"/><path d="M0 17C0 9 14 9 14 17Z" fill="#b9c2cc"/><rect x="9" y="10" width="9" height="8" fill="#ffffff"/><path d="M11 11V17M15 11V17" stroke="#b9c2cc" stroke-width="1.6"/></svg>
<svg class="a" style="left:1869px;top:578px;" width="19" height="17" viewBox="0 0 19 17"><path d="M6 0L0 4L3 8L5 7V17H15V7L17 8L19 4L13 0C12 2 7 2 6 0Z" fill="#2a78d0"/></svg>
</body></html>
